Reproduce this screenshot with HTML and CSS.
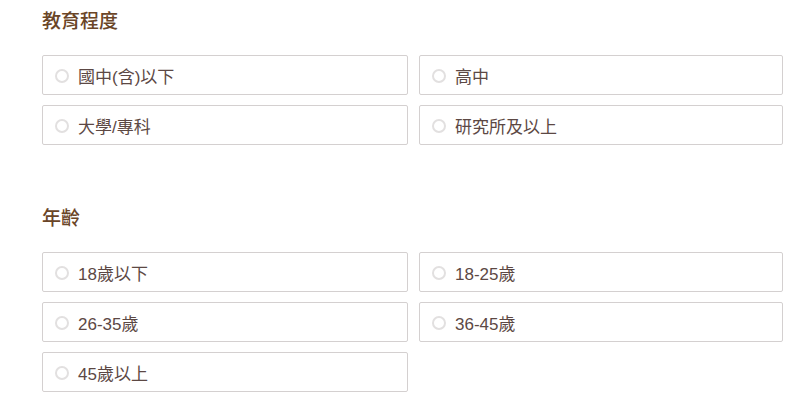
FILE: index.html
```html
<!DOCTYPE html>
<html lang="zh-Hant">
<head>
    <meta charset="UTF-8">
    <meta name="viewport" content="width=device-width, initial-scale=1.0">
    <title>問卷</title>
    <link rel="stylesheet" href="styles.css">
</head>
<body>
    <div class="survey">
        <!-- 教育程度 -->
        <section class="question">
            <h2 class="question-title">教育程度</h2>
            <div class="options">
                <label class="option"><input type="radio" name="edu"><span class="dot"></span>國中(含)以下</label>
                <label class="option"><input type="radio" name="edu"><span class="dot"></span>高中</label>
                <label class="option"><input type="radio" name="edu"><span class="dot"></span>大學/專科</label>
                <label class="option"><input type="radio" name="edu"><span class="dot"></span>研究所及以上</label>
            </div>
        </section>

        <!-- 年齡 -->
        <section class="question">
            <h2 class="question-title">年齡</h2>
            <div class="options">
                <label class="option"><input type="radio" name="age"><span class="dot"></span>18歲以下</label>
                <label class="option"><input type="radio" name="age"><span class="dot"></span>18-25歲</label>
                <label class="option"><input type="radio" name="age"><span class="dot"></span>26-35歲</label>
                <label class="option"><input type="radio" name="age"><span class="dot"></span>36-45歲</label>
                <label class="option"><input type="radio" name="age"><span class="dot"></span>45歲以上</label>
            </div>
        </section>
    </div>
</body>
</html>
```

FILE: styles.css
```css
/* General styles */
* {
    margin: 0;
    padding: 0;
    box-sizing: border-box;
}

body {
    font-family: "Liberation Sans", "Noto Sans CJK TC", sans-serif;
    background-color: #fff;
    color: #5c4844;
    overflow: hidden;
}

.survey {
    width: 784px;
    padding: 8px 0 0 42px;
}

.question {
    margin-bottom: 60px;
}

.question:last-child {
    margin-bottom: 0;
}

.question-title {
    font-size: 19px;
    font-weight: 500;
    line-height: 28px;
    color: #6a4527;
    margin-bottom: 19px;
}

/* Options grid */
.options {
    display: grid;
    grid-template-columns: 366px 364px;
    column-gap: 11px;
    row-gap: 10px;
}

.option {
    display: flex;
    align-items: center;
    height: 40px;
    padding-left: 12px;
    border: 1px solid #d4d0d0;
    border-radius: 2px;
    font-size: 17px;
    cursor: pointer;
}

.option input {
    display: none;
}

.dot {
    width: 14px;
    height: 14px;
    border: 2px solid #e2e0e0;
    border-radius: 50%;
    margin: 2px 9px 0 0;
}
```
